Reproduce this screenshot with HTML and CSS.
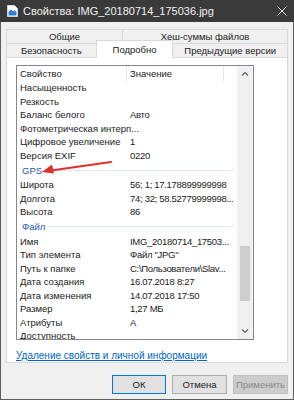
FILE: index.html
```html
<html>
  <head>
    <title>Свойства: IMG_20180714_175036.jpg</title>
    <meta charset="utf-8" />
    <link rel="stylesheet" href="styles.css">
  </head>
  <body>
    <div class="window">
      <div class="titlebar">
        <svg class="file-icon" width="11" height="12" viewBox="0 0 11 12">
          <path d="M0.5 0.5h7l3 3v8h-10z" fill="#fff" stroke="#cfd6de"/>
          <path d="M1.5 7l2.5-2.5 2 2 1.5-1.5 2 2v3.5h-8z" fill="#2d7fd3"/>
        </svg>
        <span class="title">Свойства: IMG_20180714_175036.jpg</span>
        <svg class="close" width="10" height="10" viewBox="0 0 10 10">
          <path d="M0.5 0.5l9 9M9.5 0.5l-9 9" stroke="#e8e8e8" stroke-width="1"/>
        </svg>
      </div>

      <div class="content">
        <div class="tabs">
          <div class="tab-row row-top">
            <div class="tab">Общие</div>
            <div class="tab">Хеш-суммы файлов</div>
          </div>
          <div class="tab-row row-bottom">
            <div class="tab">Безопасность</div>
            <div class="tab active">Подробно</div>
            <div class="tab">Предыдущие версии</div>
          </div>
        </div>

        <div class="panel">
          <div class="list">
            <div class="cols">
              <div class="row head">
                <span class="name">Свойство</span>
                <span class="value">Значение</span>
              </div>
              <div class="row"><span class="name">Насыщенность</span><span class="value"></span></div>
              <div class="row"><span class="name">Резкость</span><span class="value"></span></div>
              <div class="row"><span class="name">Баланс белого</span><span class="value">Авто</span></div>
              <div class="row"><span class="name wide">Фотометрическая интерп...</span></div>
              <div class="row"><span class="name">Цифровое увеличение</span><span class="value">1</span></div>
              <div class="row"><span class="name">Версия EXIF</span><span class="value">0220</span></div>
              <div class="group"><span>GPS</span><i></i></div>
              <div class="row"><span class="name">Широта</span><span class="value">56; 1; 17.178899999998</span></div>
              <div class="row"><span class="name">Долгота</span><span class="value">74; 32; 58.52779999998...</span></div>
              <div class="row"><span class="name">Высота</span><span class="value">86</span></div>
              <div class="group"><span>Файл</span><i></i></div>
              <div class="row"><span class="name">Имя</span><span class="value">IMG_20180714_17503...</span></div>
              <div class="row"><span class="name">Тип элемента</span><span class="value">Файл "JPG"</span></div>
              <div class="row"><span class="name">Путь к папке</span><span class="value">C:\Пользователи\Slav...</span></div>
              <div class="row"><span class="name">Дата создания</span><span class="value">16.07.2018 8:27</span></div>
              <div class="row"><span class="name">Дата изменения</span><span class="value">14.07.2018 17:50</span></div>
              <div class="row"><span class="name">Размер</span><span class="value">1,27 МБ</span></div>
              <div class="row"><span class="name">Атрибуты</span><span class="value">A</span></div>
              <div class="row"><span class="name">Доступность</span><span class="value"></span></div>
            </div>
            <div class="scrollbar">
              <svg class="arrow" width="8" height="5" viewBox="0 0 8 5">
                <path d="M1 4.5l3-3 3 3" fill="none" stroke="#606060" stroke-width="1.2"/>
              </svg>
              <div class="track">
                <div class="thumb"></div>
              </div>
              <svg class="arrow" width="8" height="5" viewBox="0 0 8 5">
                <path d="M1 0.5l3 3 3-3" fill="none" stroke="#606060" stroke-width="1.2"/>
              </svg>
            </div>
            <svg class="pointer" width="72" height="16" viewBox="0 0 72 16">
              <path d="M70 2L10 10.5" stroke="#e0302a" stroke-width="2.2" stroke-linecap="round"/>
              <path d="M1 12l10-7.5 2 9z" fill="#e0302a"/>
            </svg>
          </div>
          <a class="link" href="#">Удаление свойств и личной информации</a>
        </div>

        <div class="buttons">
          <button class="btn default">ОК</button>
          <button class="btn">Отмена</button>
          <button class="btn disabled">Применить</button>
        </div>
      </div>
    </div>
  </body>
</html>
```

FILE: styles.css
```css
* {
  padding: 0;
  margin: 0;
  box-sizing: border-box;
}
body {
  font-family: "Liberation Sans", Arial, sans-serif;
  font-size: 9.5px;
  color: #1b1b1b;
  width: 294px;
  height: 400px;
  overflow: hidden;
}
.window {
  width: 294px;
  height: 400px;
  background-color: #f0f0f0;
  border: 1px solid #5e5e5e;
  border-top: none;
}
.titlebar {
  height: 22px;
  background-color: #3a3a3a;
  color: #f2f2f2;
  display: flex;
  align-items: center;
  padding-left: 7px;
  padding-right: 7px;
  margin-left: -1px;
  margin-right: -1px;
}
.title {
  margin-left: 5px;
  font-size: 11px;
  flex: 1;
}
.content {
  padding: 7px 5px 0 5px;
}
.tab-row {
  display: flex;
  height: 14px;
}
.tab {
  border: 1px solid #d9d9d9;
  border-bottom: none;
  background-color: #f0f0f0;
  text-align: center;
  line-height: 13px;
  margin-left: -1px;
}
.tab:first-child {
  margin-left: 0;
}
.row-top .tab:nth-child(1) { width: 117px; }
.row-top .tab:nth-child(2) { width: 166px; }
.row-bottom .tab:nth-child(1) { width: 91px; }
.row-bottom .tab:nth-child(2) { width: 78px; }
.row-bottom .tab:nth-child(3) { width: 116px; }
.row-bottom {
  position: relative;
  z-index: 1;
}
.tab.active {
  background-color: #fff;
  height: 18px;
  margin-top: -3px;
  line-height: 17px;
}
.panel {
  background-color: #fff;
  border: 1px solid #d9d9d9;
  width: 282px;
  height: 306px;
  padding: 7px 33px 0 9px;
}
.list {
  position: relative;
  height: 275px;
  border: 1px solid #828790;
  display: flex;
}
.cols {
  flex: 1;
  overflow: hidden;
}
.row {
  display: flex;
  height: 13.5px;
  line-height: 13.5px;
  white-space: nowrap;
}
.row.head {
  height: 15px;
  line-height: 15px;
}
.name {
  width: 110px;
  flex: none;
  padding-left: 3px;
  overflow: hidden;
}
.name.wide {
  width: 208px;
}
.value {
  flex: 1;
  padding-left: 3px;
  letter-spacing: -0.3px;
}
.head .value {
  flex: none;
  width: 98px;
  letter-spacing: 0;
  border-left: 1px solid #e5e5e5;
  border-right: 1px solid #e5e5e5;
  margin-left: -1px;
}
.group {
  display: flex;
  align-items: center;
  height: 16px;
  padding-left: 5px;
  color: #1e56b3;
}
.group i {
  flex: 1;
  height: 1px;
  background-color: #dfe7f3;
  margin-left: 3px;
  margin-right: 3px;
}
.scrollbar {
  width: 16px;
  background-color: #f0f0f0;
  display: flex;
  flex-direction: column;
  align-items: center;
  padding-top: 5px;
  padding-bottom: 5px;
}
.track {
  flex: 1;
  width: 100%;
  padding: 170px 1px 28px 1px;
}
.thumb {
  height: 100%;
  background-color: #cdcdcd;
  margin: 0 2px;
}
.pointer {
  position: absolute;
  left: 24px;
  top: 94px;
}
.link {
  display: block;
  margin-top: 10px;
  color: #0066cc;
  font-size: 10px;
}
.buttons {
  display: flex;
  justify-content: flex-end;
  gap: 6px;
  padding-top: 12px;
}
.btn {
  font-family: inherit;
  font-size: 9.5px;
  width: 55px;
  height: 19px;
  background-color: #e1e1e1;
  border: 1px solid #adadad;
  color: #1b1b1b;
}
.btn.default {
  border: 1px solid #0078d7;
  width: 54px;
}
.btn.disabled {
  background-color: #cccccc;
  border-color: #bfbfbf;
  color: #8a8a8a;
}
```
